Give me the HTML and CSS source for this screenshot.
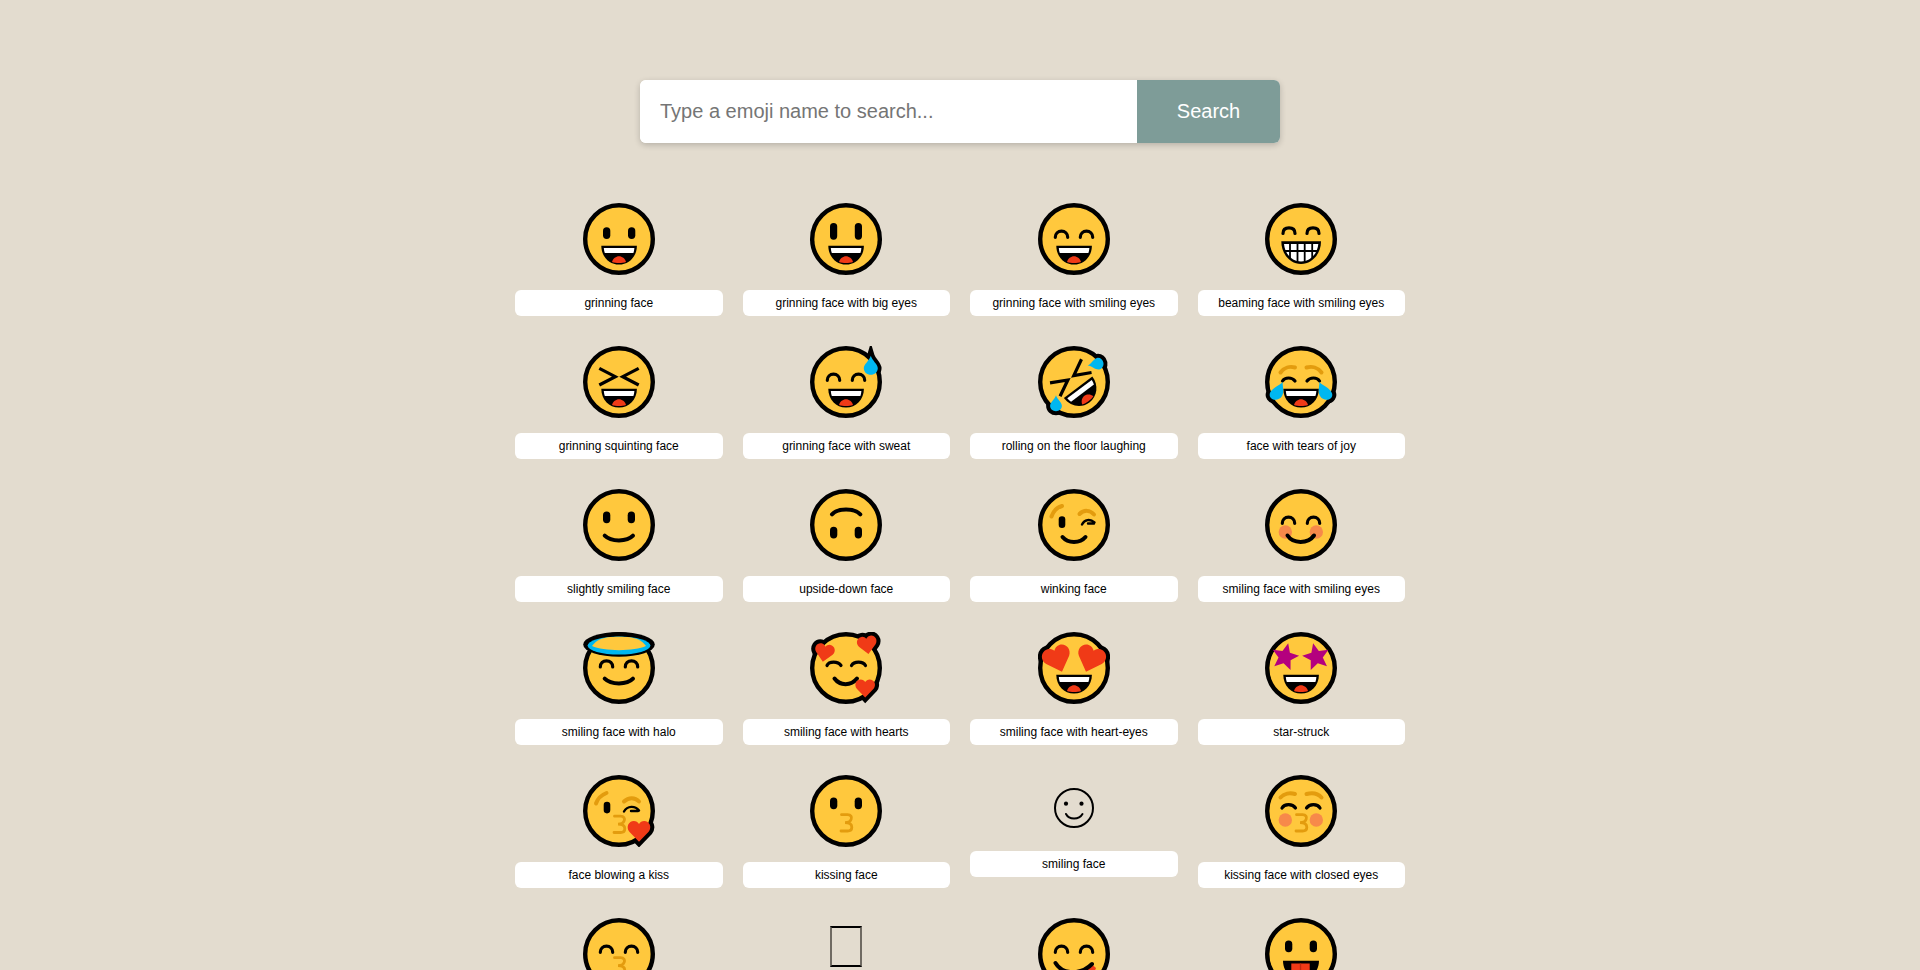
FILE: index.html
```html
<!DOCTYPE html>
<html lang="en">
<head>
  <meta charset="UTF-8" />
  <meta name="viewport" content="width=device-width, initial-scale=1.0"/>
  <title>Emoji search</title>
  <link rel="stylesheet" href="styles.css">
</head>
<body>
  <!-- shared parts of the faces -->
  <svg class="defs" aria-hidden="true">
    <defs>
      <g id="face">
        <circle class="skin" cx="36" cy="36" r="33.8"/>
      </g>
      <g id="dots">
        <rect class="ink" x="20" y="24.3" width="7.3" height="11.7" rx="3.65"/>
        <rect class="ink" x="45" y="24.3" width="7.3" height="11.7" rx="3.65"/>
      </g>
      <g id="dots-low">
        <rect class="ink" x="20" y="22.5" width="7.3" height="11.7" rx="3.65"/>
        <rect class="ink" x="44.7" y="22.5" width="7.3" height="11.7" rx="3.65"/>
      </g>
      <g id="arcs">
        <path class="line" d="M17.3 34.3C17.3 30.5 20 28.2 23.5 28.2S29.7 30.5 29.7 34.3"/>
        <path class="line" d="M42.3 34.3C42.3 30.5 45 28.2 48.5 28.2S54.7 30.5 54.7 34.3"/>
      </g>
      <g id="laugh">
        <path class="ink" d="M18.3 42.7H53.9C53.9 53.5 46 61.6 36 61.6S18.3 53.5 18.3 42.7Z"/>
        <path class="white" d="M20.8 45H51.4C51.3 46.8 51 48.5 50.4 50H21.8C21.2 48.5 20.9 46.8 20.8 45Z"/>
        <path class="red" d="M29 59C30 55.5 33 53.3 36 53.3S42 55.5 43 59C41 59.8 38.5 60 36 60S31 59.8 29 59Z"/>
      </g>
      <g id="squint">
        <path class="line-miter" d="M16.3 22.3L32.3 30.7L16.3 39"/>
        <path class="line-miter" d="M55.7 22.3L39.7 30.7L55.7 39"/>
      </g>
      <g id="soft-smile">
        <path class="line-thick" d="M21.7 46.7C28 53 44 53 50 46.7"/>
      </g>
      <g id="kiss">
        <path class="brow-thin" d="M31.5 39.7H37.5C41 39.7 42 42 41.2 44.2C40.5 46.5 38 47.7 35 47.7C38.5 47.7 41.8 48.7 41.8 52.2C41.8 54.7 40 56 37.5 56H31"/>
      </g>
      <path id="heart" class="shape" d="M10 18L1.6 9.3C-1.6 5.2 1 0 5.5 0C7.5 0 9 1 10 2.6C11 1 12.5 0 14.5 0C19 0 21.6 5.2 18.4 9.3Z"/>
      <path id="drop" class="shape" d="M0 0C1.5 5 7 8.5 7 12.5C7 16.3 3.8 19 0 19S-7 16.3 -7 12.5C-7 8.5 -1.5 5 0 0Z"/>
      <path id="joy-tear" class="shape" d="M17.5 36C18 42 19 47 17 50C14.5 54.5 8 55 5.5 51.5C3 48 6.5 44 10 41.5C13 39.5 16 38 17.5 36Z"/>
      <path id="star" d="M0 -13.5L3.64 -5.02L12.84 -4.17L5.9 1.92L7.94 10.92L0 6.2L-7.94 10.92L-5.9 1.92L-12.84 -4.17L-3.64 -5.02Z"/>
    </defs>
  </svg>

  <div class="page">
    <form class="search-box" onsubmit="return false">
      <input type="text" class="search-input" placeholder="Type a emoji name to search..." />
      <button type="submit" class="search-btn">Search</button>
    </form>

    <div class="emoji-grid">
      <div class="emoji-card">
        <svg class="emoji" viewBox="0 0 72 72"><use href="#face"/><use href="#dots"/><use href="#laugh"/></svg>
        <div class="emoji-name">grinning face</div>
      </div>
      <div class="emoji-card">
        <svg class="emoji" viewBox="0 0 72 72"><use href="#face"/><rect class="ink" x="20" y="20" width="7.2" height="16.7" rx="3.6"/><rect class="ink" x="44.8" y="20" width="7.2" height="16.7" rx="3.6"/><use href="#laugh"/></svg>
        <div class="emoji-name">grinning face with big eyes</div>
      </div>
      <div class="emoji-card">
        <svg class="emoji" viewBox="0 0 72 72"><use href="#face"/><use href="#arcs"/><use href="#laugh"/></svg>
        <div class="emoji-name">grinning face with smiling eyes</div>
      </div>
      <div class="emoji-card">
        <svg class="emoji" viewBox="0 0 72 72">
          <use href="#face"/>
          <path class="line" d="M18 30.5C18 26.5 20.5 24.8 24 24.8S30 26.5 30 30.5"/>
          <path class="line" d="M42 30.5C42 26.5 44.5 24.8 48 24.8S54 26.5 54 30.5"/>
          <path class="ink" d="M16.3 38.3H56C56 51 47 61 36 61S16.3 51 16.3 38.3Z"/>
          <path class="white" d="M19 41H53.3C52.6 50.5 45.5 58.5 36 58.5S19.8 50.5 19 41Z"/>
          <path class="teeth" d="M19 48H53M25 40V56M32.5 40V59M39.7 40V59M47.2 40V56"/>
        </svg>
        <div class="emoji-name">beaming face with smiling eyes</div>
      </div>

      <div class="emoji-card">
        <svg class="emoji" viewBox="0 0 72 72"><use href="#face"/><use href="#squint"/><use href="#laugh"/></svg>
        <div class="emoji-name">grinning squinting face</div>
      </div>
      <div class="emoji-card">
        <svg class="emoji" viewBox="0 0 72 72"><use class="bump bump-thin" href="#drop" transform="translate(60.8 9.8)"/><use href="#face"/><use href="#arcs"/><use href="#laugh"/><use class="blue" href="#drop" transform="translate(60.8 9.8)"/></svg>
        <div class="emoji-name">grinning face with sweat</div>
      </div>
      <div class="emoji-card">
        <svg class="emoji" viewBox="0 0 72 72">
          <use class="bump" href="#drop" transform="translate(49.7 19.5) rotate(-100) scale(.84)"/>
          <use class="bump" href="#drop" transform="translate(18 49.3) scale(.84)"/>
          <use href="#face"/>
          <g transform="rotate(-37 36 36)"><use href="#squint"/><use href="#laugh"/></g>
          <use class="blue" href="#drop" transform="translate(49.7 19.5) rotate(-100) scale(.84)"/>
          <use class="blue" href="#drop" transform="translate(18 49.3) scale(.84)"/>
        </svg>
        <div class="emoji-name">rolling on the floor laughing</div>
      </div>
      <div class="emoji-card">
        <svg class="emoji" viewBox="0 0 72 72">
          <use class="bump" href="#joy-tear"/>
          <use class="bump" href="#joy-tear" transform="matrix(-1 0 0 1 72 0)"/>
          <use href="#face"/>
          <path class="brow" d="M15.5 26.5C19 21.5 25 20 30 21.5"/>
          <path class="brow" d="M41.5 21.5C47 20 53 21.5 56.5 26.5"/>
          <path class="line" d="M17.5 35C20 31 27 31 30 35"/>
          <path class="line" d="M42 35C45 31 52 31 54.5 35"/>
          <use href="#laugh"/>
          <use class="blue" href="#joy-tear"/>
          <use class="blue" href="#joy-tear" transform="matrix(-1 0 0 1 72 0)"/>
        </svg>
        <div class="emoji-name">face with tears of joy</div>
      </div>

      <div class="emoji-card">
        <svg class="emoji" viewBox="0 0 72 72"><use href="#face"/><use href="#dots-low"/><use href="#soft-smile"/></svg>
        <div class="emoji-name">slightly smiling face</div>
      </div>
      <div class="emoji-card">
        <svg class="emoji" viewBox="0 0 72 72"><use href="#face"/><g transform="rotate(180 36 36)"><use href="#dots-low"/><use href="#soft-smile"/></g></svg>
        <div class="emoji-name">upside-down face</div>
      </div>
      <div class="emoji-card">
        <svg class="emoji" viewBox="0 0 72 72">
          <use href="#face"/>
          <path class="brow" d="M13.5 27.5C15 23 19 18.5 24 17"/>
          <path class="brow" d="M41.5 25C46 20.5 52 21 56 25.5"/>
          <rect class="ink" x="20.7" y="27.3" width="6.6" height="11.7" rx="3.3"/>
          <path class="line-wink" d="M44 35.5C46.5 30.5 52 29.5 56.5 33.5M50 34.5H56"/>
          <path class="line-thick" d="M24.5 48C30 54.5 42 54.5 47.5 48"/>
        </svg>
        <div class="emoji-name">winking face</div>
      </div>
      <div class="emoji-card">
        <svg class="emoji" viewBox="0 0 72 72">
          <use href="#face"/>
          <circle class="cheek" cx="20.3" cy="43" r="6.7"/>
          <circle class="cheek" cx="51.3" cy="43" r="6.7"/>
          <use href="#arcs"/>
          <path class="line-thick" d="M22.5 46.5C28 55 43 55 49 46.5"/>
        </svg>
        <div class="emoji-name">smiling face with smiling eyes</div>
      </div>

      <div class="emoji-card">
        <svg class="emoji" viewBox="0 0 72 72">
          <use href="#face"/>
          <ellipse class="ink" cx="36" cy="12.4" rx="35.8" ry="12.4"/>
          <ellipse class="blue" cx="36" cy="13.6" rx="31.4" ry="9"/>
          <path class="skin-flat" d="M9 14C11 11 14 9 17.3 7.3C24 4 48 4 54.7 7.3C58 9 61 11 63 14C52 19.5 20 19.5 9 14Z"/>
          <path class="line" d="M17.3 35C17.3 31 20 28.8 23.5 28.8S29.7 31 29.7 35"/>
          <path class="line" d="M42.3 35C42.3 31 45 28.8 48.5 28.8S54.7 31 54.7 35"/>
          <use href="#soft-smile"/>
        </svg>
        <div class="emoji-name">smiling face with halo</div>
      </div>
      <div class="emoji-card">
        <svg class="emoji" viewBox="0 0 72 72">
          <use class="bump" href="#heart" transform="translate(4.4 12) rotate(10 10 9)"/>
          <use class="bump" href="#heart" transform="translate(47.2 4.2) rotate(-8 10 9)"/>
          <use class="bump" href="#heart" transform="translate(45.2 47.4)"/>
          <use href="#face"/>
          <path class="line" d="M17 33.5C19 29 28 29 31 33.5"/>
          <path class="line" d="M41.5 33.5C44 29 53 29 55.5 33.5"/>
          <path class="line-thick" d="M24.5 46.5C30 54 41 54 47 46.5"/>
          <use class="red" href="#heart" transform="translate(4.4 12) rotate(10 10 9)"/>
          <use class="red" href="#heart" transform="translate(47.2 4.2) rotate(-8 10 9)"/>
          <use class="red" href="#heart" transform="translate(45.2 47.4)"/>
        </svg>
        <div class="emoji-name">smiling face with hearts</div>
      </div>
      <div class="emoji-card">
        <svg class="emoji" viewBox="0 0 72 72">
          <use class="bump" href="#heart" transform="translate(4.2 15.8) rotate(-20 11 10) scale(1.45)"/>
          <g transform="matrix(-1 0 0 1 72 0)"><use class="bump" href="#heart" transform="translate(4.2 15.8) rotate(-20 11 10) scale(1.45)"/></g>
          <use href="#face"/>
          <use href="#laugh"/>
          <use class="red" href="#heart" transform="translate(4.2 15.8) rotate(-20 11 10) scale(1.45)"/>
          <g transform="matrix(-1 0 0 1 72 0)"><use class="red" href="#heart" transform="translate(4.2 15.8) rotate(-20 11 10) scale(1.45)"/></g>
        </svg>
        <div class="emoji-name">smiling face with heart-eyes</div>
      </div>
      <div class="emoji-card">
        <svg class="emoji" viewBox="0 0 72 72">
          <use href="#face"/>
          <use href="#laugh"/>
          <use class="magenta" href="#star" transform="translate(20 25) rotate(13) scale(1.05)"/>
          <use class="magenta" href="#star" transform="translate(51.3 25) rotate(-13) scale(1.05)"/>
        </svg>
        <div class="emoji-name">star-struck</div>
      </div>

      <div class="emoji-card">
        <svg class="emoji" viewBox="0 0 72 72">
          <use class="bump" href="#heart" transform="translate(44.5 46) scale(1.15)"/>
          <use href="#face"/>
          <path class="brow" d="M13 28.5C14.5 24 18.5 20 23.5 18"/>
          <path class="brow" d="M41 26.5C45.5 22 52 22 56 26.5"/>
          <rect class="ink" x="20.7" y="26.7" width="6.6" height="11.7" rx="3.3"/>
          <path class="line-wink" d="M41 36.5C44.5 30.5 52 30.5 56 35.5M48 36H55"/>
          <use href="#kiss" transform="translate(0 1.5)"/>
          <use class="red" href="#heart" transform="translate(44.5 46) scale(1.15)"/>
        </svg>
        <div class="emoji-name">face blowing a kiss</div>
      </div>
      <div class="emoji-card">
        <svg class="emoji" viewBox="0 0 72 72"><use href="#face"/><use href="#dots-low"/><use href="#kiss"/></svg>
        <div class="emoji-name">kissing face</div>
      </div>
      <div class="emoji-card">
        <svg class="emoji-text" viewBox="0 0 40 40">
          <circle class="thin" cx="20" cy="20" r="19"/>
          <circle class="ink" cx="12" cy="15.7" r="2.1"/>
          <circle class="ink" cx="27.5" cy="15.7" r="2.1"/>
          <path class="thin" d="M12 26C15 32 25 32 28.5 26"/>
        </svg>
        <div class="emoji-name">smiling face</div>
      </div>
      <div class="emoji-card">
        <svg class="emoji" viewBox="0 0 72 72">
          <use href="#face"/>
          <path class="brow" d="M15.5 22.5C19 18.5 25 17.5 30 19"/>
          <path class="brow" d="M41.5 19C47 17.5 53 18.5 56.5 22.5"/>
          <path class="line" d="M17 33C19.5 28.5 27.5 28.5 30.5 33"/>
          <path class="line" d="M41.5 33C44.5 28.5 52.5 28.5 55 33"/>
          <circle class="cheek" cx="20.3" cy="45" r="6.7"/>
          <circle class="cheek" cx="51.3" cy="45" r="6.7"/>
          <use href="#kiss"/>
        </svg>
        <div class="emoji-name">kissing face with closed eyes</div>
      </div>

      <!-- last row: names are below the fold -->
      <div class="emoji-card">
        <svg class="emoji" viewBox="0 0 72 72"><use href="#face"/><use href="#arcs"/><use href="#kiss"/></svg>
      </div>
      <div class="emoji-card">
        <div class="missing-glyph"></div>
      </div>
      <div class="emoji-card">
        <svg class="emoji" viewBox="0 0 72 72">
          <use href="#face"/>
          <use href="#arcs"/>
          <path class="red" d="M44 52L53 45.5L58 50C56 56 50 60 46 60Z"/>
          <path class="line-thick" d="M17.5 45C24 56 42 58 54 46"/>
        </svg>
      </div>
      <div class="emoji-card">
        <svg class="emoji" viewBox="0 0 72 72">
          <use href="#face"/>
          <use href="#dots-low"/>
          <path class="ink" d="M18 42.7H54C54 52 48 58 44 60V63H28V60C24 58 18 52 18 42.7Z"/>
          <path class="red" d="M26.3 45.5H44.7V57C44.7 62 40.5 65 35.5 65S26.3 62 26.3 57Z"/>
          <path class="tongue-line" d="M35.5 45.5V56"/>
        </svg>
      </div>
    </div>
  </div>
</body>
</html>
```

FILE: styles.css
```css
* {
  box-sizing: border-box;
  font-family: "Liberation Sans", Arial, sans-serif;
}

html, body {
  height: 100%;
  overflow: hidden;
}

body {
  margin: 0;
  background: #e3dccf;
}

.defs {
  display: none;
}

.page {
  padding-top: 80px;
}

.search-box {
  display: flex;
  width: 640px;
  height: 63px;
  margin: 0 auto 60px;
  background: #fff;
  border-radius: 6px;
  overflow: hidden;
  box-shadow: 0 2px 6px rgba(0,0,0,0.2);
}

.search-input {
  flex: 1;
  min-width: 0;
  padding: 0 20px;
  border: none;
  outline: none;
  font-size: 20px;
}

.search-btn {
  width: 143px;
  border: none;
  background: #7e9c98;
  color: #fff;
  font-size: 20px;
  cursor: pointer;
}

.emoji-grid {
  display: grid;
  grid-template-columns: repeat(4, 1fr);
  gap: 30px 20px;
  width: 890px;
  margin: 0 auto;
  align-items: start;
}

.emoji-card {
  display: flex;
  flex-direction: column;
  align-items: center;
}

.emoji {
  display: block;
  width: 72px;
  height: 72px;
  margin-bottom: 15px;
}

.emoji-text {
  display: block;
  width: 40px;
  height: 40px;
  margin: 13px 0 23px;
}

.missing-glyph {
  width: 32px;
  height: 41px;
  margin: 8px 0 23px;
  border-top: 2px solid #000;
  border-bottom: 2px solid #000;
  border-left: 2px solid #6f6a62;
  border-right: 2px solid #6f6a62;
}

.emoji-name {
  width: 100%;
  height: 26px;
  line-height: 26px;
  background: #fff;
  border-radius: 6px;
  text-align: center;
  font-size: 12px;
  color: #000;
}

/* emoji paint */
.skin {
  fill: #ffc83d;
  stroke: #000;
  stroke-width: 4.4;
}

.skin-flat {
  fill: #ffc83d;
}

.ink {
  fill: #000;
}

.white {
  fill: #fff;
}

.red {
  fill: #f03a17;
}

.blue {
  fill: #00b7f0;
}

.magenta {
  fill: #b4007e;
}

.cheek {
  fill: #f7894a;
}

.shape {
  vector-effect: non-scaling-stroke;
}

.bump {
  fill: #000;
  stroke: #000;
  stroke-width: 8;
  stroke-miterlimit: 12;
}

.bump-thin {
  stroke-width: 7.5;
}

.line, .line-thick, .line-miter, .line-wink, .brow, .brow-thin, .thin, .teeth, .tongue-line {
  fill: none;
  stroke: #000;
  stroke-linecap: round;
}

.line {
  stroke-width: 3.2;
}

.line-thick {
  stroke-width: 4;
}

.line-miter {
  stroke-width: 3.2;
  stroke-linecap: butt;
}

.line-wink {
  stroke-width: 2.4;
}

.brow {
  stroke: #e39c0e;
  stroke-width: 4;
}

.brow-thin {
  stroke: #e39c0e;
  stroke-width: 2.8;
}

.thin {
  stroke-width: 2;
}

.teeth {
  stroke-width: 1.8;
  stroke-linecap: butt;
}

.tongue-line {
  stroke: #c02a0f;
  stroke-width: 1.4;
  stroke-linecap: butt;
}
```
